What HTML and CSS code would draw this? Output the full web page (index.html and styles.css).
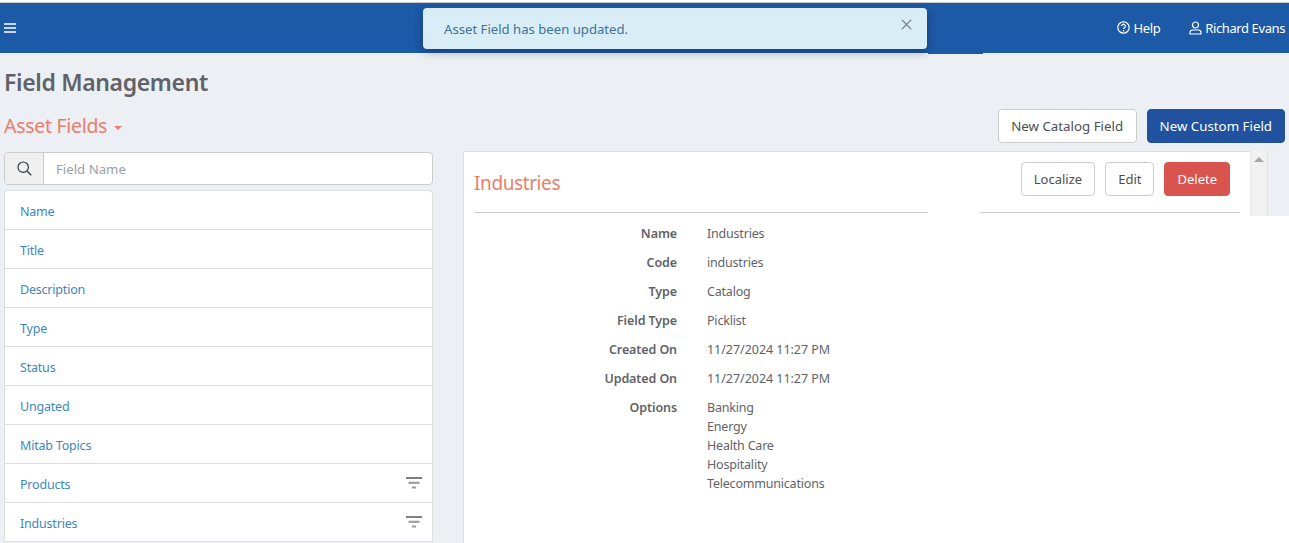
FILE: index.html
```
<!DOCTYPE html>
<html lang="en">
<head>
<meta charset="utf-8">
<title>Field Management</title>
<link rel="stylesheet" href="styles.css">
</head>
<body>
<div class="topline"></div>
<header class="navbar">
  <svg class="burger" width="12" height="10" viewBox="0 0 12 10"><path d="M0 1h12M0 5h12M0 9h12" stroke="#fff" stroke-width="1.6"/></svg>
  <div class="nav-right">
    <span class="nav-item"><svg width="13" height="13" viewBox="0 0 13 13"><circle cx="6.5" cy="6.5" r="5.7" fill="none" stroke="#fff" stroke-width="1.2"/><path d="M4.6 5.1a1.9 1.9 0 1 1 2.9 1.6c-.7.4-1 .7-1 1.4" fill="none" stroke="#fff" stroke-width="1.2"/><circle cx="6.5" cy="9.8" r=".8" fill="#fff"/></svg>Help</span>
    <span class="nav-item user"><svg width="13" height="14" viewBox="0 0 13 14"><circle cx="6.5" cy="4" r="3" fill="none" stroke="#fff" stroke-width="1.2"/><path d="M1 13v-1.5A2.5 2.5 0 0 1 3.500 9h6a2.500 2.500 0 0 1 2.500 2.500V13z" fill="none" stroke="#fff" stroke-width="1.2"/></svg>Richard Evans</span>
  </div>
</header>
<div class="toast">
  <span>Asset Field has been updated.</span>
  <svg class="toast-close" width="11" height="11" viewBox="0 0 11 11"><path d="M.8.800l9.400 9.400M10.200.800L.8 10.200" stroke="#7d8a93" stroke-width="1.300"/></svg>
</div>
<div class="nav-patch"></div>
<main class="page">
  <h1 class="title">Field Management</h1>
  <div class="subbar">
    <div class="section">Asset Fields<span class="caret"></span></div>
    <div class="actions">
      <button class="btn btn-catalog">New Catalog Field</button>
      <button class="btn btn-primary">New Custom Field</button>
    </div>
  </div>
  <div class="columns">
    <aside class="left">
      <div class="search">
        <span class="search-icon"><svg width="15" height="15" viewBox="0 0 15 15"><circle cx="6.200" cy="6.200" r="5.200" fill="none" stroke="#33393f" stroke-width="1.200"/><path d="M10 10l4.300 4.300" stroke="#33393f" stroke-width="1.300"/></svg></span>
        <span class="search-input">Field Name</span>
      </div>
      <ul class="list">
        <li>Name</li>
        <li>Title</li>
        <li>Description</li>
        <li>Type</li>
        <li>Status</li>
        <li>Ungated</li>
        <li>Mitab Topics</li>
        <li>Products<svg class="filter" width="16" height="12" viewBox="0 0 16 12"><path d="M0 1h16" stroke="#808080" stroke-width="2"/><path d="M2.500 5.800h11" stroke="#a0a0a0" stroke-width="2.200"/><path d="M6 10.500h4" stroke="#999" stroke-width="2"/></svg></li>
        <li>Industries<svg class="filter" width="16" height="12" viewBox="0 0 16 12"><path d="M0 1h16" stroke="#808080" stroke-width="2"/><path d="M2.500 5.800h11" stroke="#a0a0a0" stroke-width="2.200"/><path d="M6 10.500h4" stroke="#999" stroke-width="2"/></svg></li>
      </ul>
    </aside>
    <section class="detail">
      <div class="detail-top">
        <div class="card-head">
          <div class="head-row">
            <h2 class="detail-title">Industries</h2>
            <div class="head-actions">
              <button class="btn">Localize</button>
              <button class="btn">Edit</button>
              <button class="btn btn-danger">Delete</button>
            </div>
          </div>
          <div class="rule"><span class="rule-a"></span><span class="rule-b"></span></div>
        </div>
        <div class="scrollbar"><span class="arrow"></span></div>
        <div class="gutter"></div>
      </div>
      <dl class="fields">
        <dt>Name</dt><dd>Industries</dd>
        <dt>Code</dt><dd>industries</dd>
        <dt>Type</dt><dd>Catalog</dd>
        <dt>Field Type</dt><dd>Picklist</dd>
        <dt>Created On</dt><dd class="date">11/27/2024 11:27 PM</dd>
        <dt>Updated On</dt><dd class="date">11/27/2024 11:27 PM</dd>
        <dt>Options</dt>
        <dd class="options"><span>Banking</span><span>Energy</span><span>Health Care</span><span>Hospitality</span><span>Telecommunications</span></dd>
      </dl>
    </section>
  </div>
</main>
</body>
</html>
```
FILE: styles.css
```
* { box-sizing: border-box; }
html, body { margin: 0; height: 543px; overflow: hidden; }
body {
  position: relative;
  background: #eceff4;
  font-family: "Noto Sans", "Open Sans", sans-serif;
  font-size: 13px;
  color: #5f6368;
}
.topline { height: 3px; background: #fff; border-bottom: 1px solid #c9c9c9; }
.navbar {
  height: 50px;
  background: #1c59a6;
  color: #fff;
  display: flex;
  align-items: center;
  justify-content: space-between;
  padding: 0 4px;
}
.burger { display: block; margin-top: -1px; }
.nav-right { display: flex; gap: 29px; margin-top: -1px; }
.nav-item { display: flex; align-items: center; gap: 4px; font-size: 13px; letter-spacing: -.4px; }
.nav-item.user { gap: 3px; }
.nav-item svg { display: block; }
.toast {
  position: absolute;
  left: 423px;
  top: 8px;
  width: 504px;
  height: 41px;
  background: #d9edf7;
  border-radius: 4px;
  box-shadow: 0 3px 10px rgba(0, 0, 0, .3);
  color: #3f7396;
  font-size: 13.15px;
  display: flex;
  align-items: center;
  padding: 0 15px 0 21px;
  justify-content: space-between;
}
.toast-close { margin-top: -9px; }
.nav-patch {
  position: absolute;
  left: 928px;
  top: 53px;
  width: 55px;
  height: 1px;
  background: #1c59a6;
}
.page { padding: 0 4px; }
.title { margin: 0; height: 56px; padding-top: 13px; font-size: 23px; line-height: 33px; letter-spacing: -.35px; font-weight: 600; color: #5f6368; }
.subbar { display: flex; justify-content: space-between; align-items: center; height: 34px; margin-bottom: 8px; }
.section { font-size: 19.5px; letter-spacing: -.3px; color: #ea7d6c; line-height: 34px; }
.caret {
  display: inline-block;
  margin-left: 7px;
  vertical-align: 3px;
  border-top: 4px solid #ea7d6c;
  border-left: 4px solid transparent;
  border-right: 4px solid transparent;
}
.actions { display: flex; gap: 10px; }
.btn {
  height: 34px;
  padding: 0 12px;
  font: inherit;
  font-size: 13.3px;
  color: #4a4f55;
  background: #fff;
  border: 1px solid #ccc;
  border-radius: 4px;
}
.btn-catalog { padding: 0 12.5px; }
.head-actions .btn { font-size: 13px; }
.btn-primary { background: #20529f; border-color: #20529f; color: #fff; }
.btn-danger { background: #d9534f; border-color: #d9534f; color: #fff; }
.columns { display: flex; align-items: flex-start; }
.left { width: 429px; flex: none; margin-top: 1px; }
.search {
  display: flex;
  height: 33px;
  background: #fff;
  border: 1px solid #ccc;
  border-radius: 4px;
  overflow: hidden;
}
.search-icon {
  width: 39px;
  background: #f0f0f0;
  border-right: 1px solid #ccc;
  display: flex;
  align-items: center;
  justify-content: center;
}
.search-input { padding: 1px 0 0 12px; line-height: 31px; font-size: 13.2px; color: #9a9fa5; }
.list {
  list-style: none;
  margin: 5px 0 0;
  padding: 0;
  background: #fff;
  border: 1px solid #ddd;
  border-bottom: 0;
  border-radius: 4px 4px 0 0;
}
.list li {
  height: 39px;
  padding: 2px 10px 0 15px;
  display: flex;
  align-items: center;
  justify-content: space-between;
  font-size: 12.5px;
  letter-spacing: -.2px;
  color: #3d87bd;
  border-bottom: 1px solid #ddd;
}
.filter { display: block; margin-top: -2px; }
.detail {
  position: relative;
  flex: 1;
  margin: 0 -4px 0 30px;
  background: #fff;
  height: 392px;
  border-left: 1px solid #ddd;
}
.detail-top { display: flex; height: 65px; }
.card-head { width: 786px; flex: none; border-top: 1px solid #ddd; padding: 0 10px; }
.head-row { display: flex; justify-content: space-between; align-items: center; height: 60px; padding-right: 10px; }
.detail-title { margin: 2px 0 0; font-size: 19px; letter-spacing: -.4px; font-weight: 400; color: #ea7d6c; }
.head-actions { display: flex; gap: 10px; margin-top: -7px; }
.rule { display: flex; justify-content: space-between; }
.rule-a, .rule-b { display: block; height: 1px; background: #ccc; }
.rule-a { width: 454px; }
.rule-b { width: 260px; }
.scrollbar { width: 18px; flex: none; background: #f1f1f1; border-left: 1px solid #e8e8e8; border-right: 1px solid #e4e4e4; padding: 6px 0 0 3px; }
.arrow { display: block; width: 0; border-bottom: 5px solid #a8a8a8; border-left: 5px solid transparent; border-right: 5px solid transparent; }
.gutter { flex: 1; background: #eceff4; }
.fields {
  margin: 8px 0 0;
  display: grid;
  grid-template-columns: 213px 1fr;
  column-gap: 30px;
  row-gap: 10px;
  line-height: 19px;
  font-size: 12.5px;
  letter-spacing: -.2px;
}
.fields dt { font-weight: 600; text-align: right; letter-spacing: -.1px; color: #5f6368; }
.fields dd { margin: 0; color: #5f6368; }
.fields .date { letter-spacing: -.04px; }
.options span { display: block; }
```
